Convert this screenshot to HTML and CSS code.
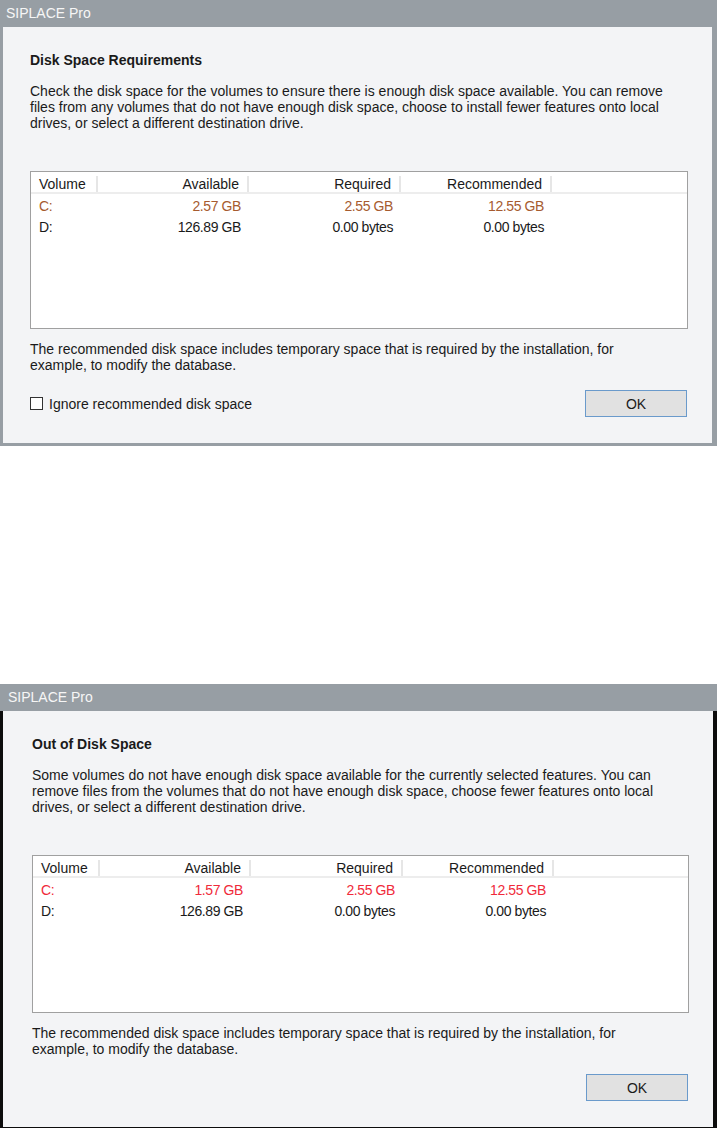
FILE: index.html
```html
<!DOCTYPE html>
<html lang="en">
<head>
    <meta charset="UTF-8">
    <title>SIPLACE Pro - Disk Space</title>
    <link rel="stylesheet" href="styles.css">
</head>
<body>
    <div class="dialog">
        <div class="titlebar">SIPLACE Pro</div>
        <div class="dialog-body">
            <h2 class="dialog-heading">Disk Space Requirements</h2>
            <p class="dialog-text">Check the disk space for the volumes to ensure there is enough disk space available. You can remove<br>files from any volumes that do not have enough disk space, choose to install fewer features onto local<br>drives, or select a different destination drive.</p>
            <div class="volume-list">
                <div class="list-head">
                    <span class="col col-name">Volume</span>
                    <span class="col">Available</span>
                    <span class="col">Required</span>
                    <span class="col">Recommended</span>
                    <span class="col col-fill"></span>
                </div>
                <div class="list-body">
                    <div class="list-row warn">
                        <span class="col col-name">C:</span>
                        <span class="col">2.57 GB</span>
                        <span class="col">2.55 GB</span>
                        <span class="col">12.55 GB</span>
                    </div>
                    <div class="list-row">
                        <span class="col col-name">D:</span>
                        <span class="col">126.89 GB</span>
                        <span class="col">0.00 bytes</span>
                        <span class="col">0.00 bytes</span>
                    </div>
                </div>
            </div>
            <p class="dialog-note">The recommended disk space includes temporary space that is required by the installation, for<br>example, to modify the database.</p>
            <div class="dialog-actions">
                <label class="check"><span class="check-box"></span>Ignore recommended disk space</label>
                <button class="ok-btn">OK</button>
            </div>
        </div>
    </div>

    <div class="dialog dialog-error">
        <div class="titlebar">SIPLACE Pro</div>
        <div class="dialog-body">
            <h2 class="dialog-heading">Out of Disk Space</h2>
            <p class="dialog-text">Some volumes do not have enough disk space available for the currently selected features. You can<br>remove files from the volumes that do not have enough disk space, choose fewer features onto local<br>drives, or select a different destination drive.</p>
            <div class="volume-list">
                <div class="list-head">
                    <span class="col col-name">Volume</span>
                    <span class="col">Available</span>
                    <span class="col">Required</span>
                    <span class="col">Recommended</span>
                    <span class="col col-fill"></span>
                </div>
                <div class="list-body">
                    <div class="list-row full">
                        <span class="col col-name">C:</span>
                        <span class="col">1.57 GB</span>
                        <span class="col">2.55 GB</span>
                        <span class="col">12.55 GB</span>
                    </div>
                    <div class="list-row">
                        <span class="col col-name">D:</span>
                        <span class="col">126.89 GB</span>
                        <span class="col">0.00 bytes</span>
                        <span class="col">0.00 bytes</span>
                    </div>
                </div>
            </div>
            <p class="dialog-note">The recommended disk space includes temporary space that is required by the installation, for<br>example, to modify the database.</p>
            <div class="dialog-actions end">
                <button class="ok-btn">OK</button>
            </div>
        </div>
    </div>
</body>
</html>
```

FILE: styles.css
```css
body {
    margin: 0;
    background: #fff;
    font-family: "Liberation Sans", Arial, sans-serif;
    font-size: 14px;
    color: #1a1a1a;
}
.dialog {
    width: 717px;
    box-sizing: border-box;
    border: 3px solid #979ea4;
    border-top: none;
    border-right-width: 5px;
    margin-bottom: 238px;
}
.titlebar {
    height: 27px;
    line-height: 26px;
    background: #979ea4;
    color: #f6f6f6;
    font-size: 14px;
    margin: 0 -5px 0 -3px;
    padding-left: 6px;
}
.dialog-body {
    background: #f3f4f6;
    padding: 25px 24px 26px 27px;
}
.dialog-heading {
    margin: 0;
    font-size: 14px;
    line-height: 16px;
    font-weight: bold;
}
.dialog-text {
    margin: 15px 0 0 0;
    line-height: 16px;
}
.volume-list {
    margin-top: 40px;
    height: 158px;
    box-sizing: border-box;
    border: 1px solid #a0a0a0;
    background: #fff;
}
.list-head, .list-row {
    display: grid;
    grid-template-columns: 67px 151px 152px 151px 1fr;
}
.list-head {
    height: 22px;
    padding-top: 4px;
    line-height: 16px;
    border-bottom: 2px solid #ededed;
    box-sizing: border-box;
}
.list-head .col {
    border-right: 2px solid #e6e6e6;
}
.list-head .col-fill {
    border-right: none;
}
.col {
    padding: 0 8px 0 8px;
    text-align: right;
    white-space: nowrap;
}
.col-name {
    text-align: left;
}
.list-body {
    padding-top: 2px;
}
.list-row {
    height: 21px;
    line-height: 21px;
    letter-spacing: -0.4px;
}
.list-row.warn {
    color: #a65b2f;
}
.list-row.full {
    color: #f02a3a;
}
.dialog-note {
    margin: 12px 0 0 0;
    line-height: 16px;
}
.dialog-actions {
    display: flex;
    align-items: center;
    justify-content: space-between;
    margin-top: 17px;
    padding-right: 1px;
}
.dialog-actions.end {
    justify-content: flex-end;
}
.check {
    display: flex;
    align-items: center;
    gap: 6px;
}
.check-box {
    width: 13px;
    height: 13px;
    box-sizing: border-box;
    border: 1px solid #333;
    background: #fff;
}
.ok-btn {
    width: 102px;
    height: 27px;
    font-family: "Liberation Sans", Arial, sans-serif;
    font-size: 14px;
    color: #1a1a1a;
    background: #e1e1e1;
    border: 1px solid #6a9acb;
    padding: 0;
}
.dialog-error {
    border-color: #0c0c0c;
    border-right-width: 4px;
    border-bottom-width: 2px;
    margin-bottom: 0;
}
.dialog-error .titlebar {
    margin-right: -4px;
    padding-left: 8px;
}
.dialog-error .dialog-body {
    padding-left: 29px;
}
```
